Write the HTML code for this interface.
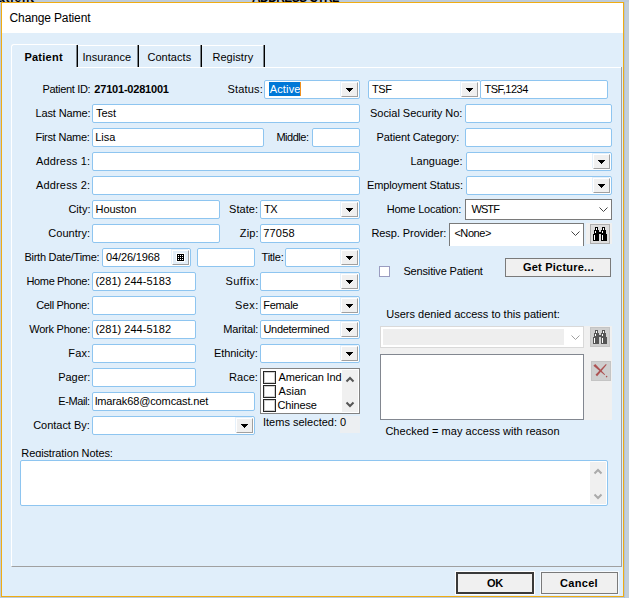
<!DOCTYPE html>
<html><head><meta charset="utf-8"><style>
html,body{margin:0;padding:0;width:629px;height:598px;overflow:hidden;position:relative;background:#E0EEFA}
.t{position:absolute;font-family:"Liberation Sans",sans-serif;font-size:11px;line-height:13px;white-space:nowrap;color:#000}
.f{position:absolute;box-sizing:border-box;border:1px solid #8EC5F0;border-radius:2px;background:#fff}
.db{position:absolute;box-sizing:border-box;background:#F0F0F0;box-shadow:-1px -1px 0 #E6F1FB;border-left:1px solid #fff;border-top:1px solid #fff;border-right:1px solid #A0A0A0;border-bottom:1px solid #A0A0A0}
.ar{position:absolute;display:block}
.w10{position:absolute;box-sizing:border-box;border:1px solid #7A7A7A;background:#fff}
.bb{position:absolute;box-sizing:border-box;border:1px solid #ADADAD;background:#DDDDDD}
.pb{position:absolute;box-sizing:border-box;border:1px solid #7A7A7A;background:#F0F0F0}
.g1{position:absolute;box-sizing:border-box;border:1px solid #D9D9D9;background:#fff}
.lb{position:absolute;box-sizing:border-box;border:1px solid #828790;background:#fff}
.cbx{position:absolute;box-sizing:border-box;border:1px solid #9A9CC0;background:#fff}
.rcb{position:absolute;box-sizing:border-box;border:1px solid #262626;background:#fff;box-shadow:inset 0 0 0 1px #cfcfcf}
</style></head><body>
<div style="position:absolute;left:0;top:0;width:629px;height:598px;background:#BDCBD9"></div>
<div class="t" style="left:-2px;top:-8px;font-weight:bold;font-size:12px;letter-spacing:0.8px">atient</div>
<div class="t" style="left:252px;top:-8px;font-weight:bold;font-size:12px;letter-spacing:-0.6px">ADDRESS CTRL</div>
<div style="position:absolute;left:1px;top:2px;width:621px;height:593px;border:1px solid #F0AC12;background:#E0EEFA"></div>
<div style="position:absolute;left:2px;top:3px;width:621px;height:30px;background:#fff"></div>
<div style="position:absolute;left:624px;top:2px;width:5px;height:596px;background:linear-gradient(90deg,#B2C2D3 0,#B2C2D3 1px,#C3CFDA 1px,#C3CFDA)"></div>
<div class="t" style="left:9.60px;top:12px;letter-spacing:-0.138px;font-size:12px;">Change Patient</div>
<div style="position:absolute;left:11px;top:67px;width:609px;height:499px;border-left:1px solid #fff;border-bottom:1px solid #A0A0A0;border-right:1px solid #A0A0A0"></div>
<div style="position:absolute;left:77px;top:67px;width:544px;height:1px;background:#fff"></div>
<div style="position:absolute;left:11px;top:44px;width:65px;height:24px;border-left:1px solid #fff;border-top:1px solid #fff;border-top-left-radius:3px;background:#E0EEFA"></div>
<div style="position:absolute;left:78px;top:45px;width:186px;height:1px;background:#fff"></div>
<div style="position:absolute;left:77px;top:45px;width:1px;height:22px;background:#000"></div>
<div style="position:absolute;left:76px;top:45px;width:1px;height:22px;background:rgba(0,0,0,0.45)"></div>
<div style="position:absolute;left:138px;top:45px;width:1px;height:22px;background:#000"></div>
<div style="position:absolute;left:137px;top:45px;width:1px;height:22px;background:rgba(0,0,0,0.45)"></div>
<div style="position:absolute;left:201px;top:45px;width:1px;height:22px;background:#000"></div>
<div style="position:absolute;left:200px;top:45px;width:1px;height:22px;background:rgba(0,0,0,0.45)"></div>
<div style="position:absolute;left:264px;top:45px;width:1px;height:22px;background:#000"></div>
<div style="position:absolute;left:263px;top:45px;width:1px;height:22px;background:rgba(0,0,0,0.45)"></div>
<div class="t" style="left:24.40px;top:51px;letter-spacing:0.250px;font-weight:bold;">Patient</div>
<div class="t" style="left:82.40px;top:51px;letter-spacing:0.050px;">Insurance</div>
<div class="t" style="left:147.40px;top:51px;letter-spacing:0.057px;">Contacts</div>
<div class="t" style="left:212.40px;top:51px;letter-spacing:0.071px;">Registry</div>
<div class="t" style="left:42.50px;top:83px;letter-spacing:-0.330px;">Patient ID:</div>
<div class="t" style="left:94.30px;top:83px;letter-spacing:-0.200px;font-weight:bold;">27101-0281001</div>
<div class="t" style="left:227.40px;top:83px;letter-spacing:0.200px;">Status:</div>
<div class="f" style="left:264px;top:80px;width:96px;height:19px;"></div>
<div class="db" style="left:341px;top:82px;width:17px;height:15px;"></div>
<svg class="ar" style="left:346px;top:88px" width="7" height="4" shape-rendering="crispEdges"><path d="M0 0h7v1h-1v1h-1v1h-1v1h-1v-1h-1v-1h-1v-1h-1z" fill="#000"/></svg>
<div style="position:absolute;left:269px;top:82px;width:31px;height:14px;background:#0078D7"></div>
<div class="t" style="left:269.70px;top:83px;letter-spacing:0.160px;color:#fff;">Active</div>
<div style="position:absolute;left:300px;top:82px;width:1px;height:14px;background:#F0901E"></div>
<div class="f" style="left:368px;top:80px;width:113px;height:19px;"></div>
<div class="t" style="left:372.00px;top:83px;letter-spacing:-0.400px;">TSF</div>
<div class="db" style="left:461px;top:82px;width:17px;height:15px;"></div>
<svg class="ar" style="left:466px;top:88px" width="7" height="4" shape-rendering="crispEdges"><path d="M0 0h7v1h-1v1h-1v1h-1v1h-1v-1h-1v-1h-1v-1h-1z" fill="#000"/></svg>
<div class="f" style="left:480px;top:80px;width:128px;height:19px;"></div>
<div class="t" style="left:484.50px;top:83px;letter-spacing:-0.471px;">TSF,1234</div>
<div class="t" style="left:35.50px;top:107px;letter-spacing:-0.144px;">Last Name:</div>
<div class="f" style="left:92px;top:104px;width:268px;height:19px;"></div>
<div class="t" style="left:95.90px;top:107px;letter-spacing:0.033px;">Test</div>
<div class="t" style="left:370.00px;top:107px;letter-spacing:-0.028px;">Social Security No:</div>
<div class="f" style="left:465px;top:104px;width:147px;height:19px;"></div>
<div class="t" style="left:35.40px;top:131px;letter-spacing:-0.230px;">First Name:</div>
<div class="f" style="left:92px;top:128px;width:172px;height:19px;"></div>
<div class="t" style="left:95.20px;top:131px;letter-spacing:0.033px;">Lisa</div>
<div class="t" style="left:276.40px;top:131px;letter-spacing:-0.483px;">Middle:</div>
<div class="f" style="left:312px;top:128px;width:48px;height:19px;"></div>
<div class="t" style="left:376.60px;top:131px;letter-spacing:-0.144px;">Patient Category:</div>
<div class="f" style="left:465px;top:128px;width:147px;height:19px;"></div>
<div class="t" style="left:35.90px;top:155px;letter-spacing:0.178px;">Address 1:</div>
<div class="f" style="left:92px;top:152px;width:268px;height:19px;"></div>
<div class="t" style="left:410.50px;top:155px;letter-spacing:0.000px;">Language:</div>
<div class="f" style="left:466px;top:152px;width:146px;height:19px;"></div>
<div class="db" style="left:593px;top:154px;width:17px;height:15px;"></div>
<svg class="ar" style="left:598px;top:160px" width="7" height="4" shape-rendering="crispEdges"><path d="M0 0h7v1h-1v1h-1v1h-1v1h-1v-1h-1v-1h-1v-1h-1z" fill="#000"/></svg>
<div class="t" style="left:35.90px;top:179px;letter-spacing:0.178px;">Address 2:</div>
<div class="f" style="left:92px;top:176px;width:268px;height:19px;"></div>
<div class="t" style="left:367.00px;top:179px;letter-spacing:-0.147px;">Employment Status:</div>
<div class="f" style="left:466px;top:176px;width:146px;height:19px;"></div>
<div class="db" style="left:593px;top:178px;width:17px;height:15px;"></div>
<svg class="ar" style="left:598px;top:184px" width="7" height="4" shape-rendering="crispEdges"><path d="M0 0h7v1h-1v1h-1v1h-1v1h-1v-1h-1v-1h-1v-1h-1z" fill="#000"/></svg>
<div class="t" style="left:68.40px;top:203px;letter-spacing:0.025px;">City:</div>
<div class="f" style="left:92px;top:200px;width:128px;height:19px;"></div>
<div class="t" style="left:95.50px;top:203px;letter-spacing:-0.033px;">Houston</div>
<div class="t" style="left:229.10px;top:203px;letter-spacing:0.020px;">State:</div>
<div class="f" style="left:260px;top:200px;width:100px;height:19px;"></div>
<div class="t" style="left:263.90px;top:203px;letter-spacing:-0.400px;">TX</div>
<div class="db" style="left:341px;top:202px;width:17px;height:15px;"></div>
<svg class="ar" style="left:346px;top:208px" width="7" height="4" shape-rendering="crispEdges"><path d="M0 0h7v1h-1v1h-1v1h-1v1h-1v-1h-1v-1h-1v-1h-1z" fill="#000"/></svg>
<div class="t" style="left:386.70px;top:203px;letter-spacing:-0.192px;">Home Location:</div>
<div class="w10" style="left:465px;top:199px;width:147px;height:21px;"></div>
<div class="t" style="left:471.50px;top:203px;letter-spacing:-0.933px;">WSTF</div>
<svg class="ar" style="left:599px;top:207px" width="9" height="6"><path d="M0.5 0.5L4.5 4.5L8.5 0.5" stroke="#444" fill="none"/></svg>
<div class="t" style="left:48.30px;top:227px;letter-spacing:0.029px;">Country:</div>
<div class="f" style="left:92px;top:224px;width:128px;height:19px;"></div>
<div class="t" style="left:239.80px;top:227px;letter-spacing:0.133px;">Zip:</div>
<div class="f" style="left:260px;top:224px;width:100px;height:19px;"></div>
<div class="t" style="left:263.20px;top:227px;letter-spacing:0.225px;">77058</div>
<div class="t" style="left:371.40px;top:227px;letter-spacing:-0.064px;">Resp. Provider:</div>
<div class="w10" style="left:449px;top:223px;width:135px;height:23px;border-bottom:none"></div>
<div class="t" style="left:454.40px;top:227px;letter-spacing:-0.440px;">&lt;None&gt;</div>
<svg class="ar" style="left:571px;top:231px" width="9" height="6"><path d="M0.5 0.5L4.5 4.5L8.5 0.5" stroke="#444" fill="none"/></svg>
<div style="position:absolute;left:586px;top:223px;width:26px;height:21px;background:#F0F0F0"></div>
<div class="bb" style="left:590px;top:224px;width:20px;height:20px;"></div>
<svg class="ar" style="left:593px;top:227px" width="14" height="14" shape-rendering="crispEdges"><path d="M2 0h3v3h-3zM1 3h5v4h-5zM0 7h6v7h-6zM9 0h3v3h-3zM8 3h5v4h-5zM8 7h6v7h-6zM6 5h2v2h-2z" fill="#000"/><path d="M3 1h1v2h-1zM2 4h1v2h-1zM1 8h1v5h-1zM10 1h1v2h-1zM9 4h1v2h-1zM9 8h1v5h-1z" fill="#fff"/></svg>
<div class="t" style="left:24.40px;top:251px;letter-spacing:-0.253px;">Birth Date/Time:</div>
<div class="f" style="left:102px;top:248px;width:89px;height:19px;"></div>
<div class="t" style="left:106.00px;top:251px;letter-spacing:-0.133px;">04/26/1968</div>
<div class="db" style="left:172px;top:250px;width:17px;height:15px;background:#E3EEF8"></div>
<svg class="ar" style="left:176px;top:253px" width="9" height="9" shape-rendering="crispEdges"><rect width="9" height="9" fill="#fff"/><g transform="translate(1 1)"><rect width="7" height="7" fill="#000"/><path d="M1 1h1v1h-1zM3 1h1v1h-1zM5 1h1v1h-1zM1 3h1v1h-1zM3 3h1v1h-1zM5 3h1v1h-1zM1 5h1v1h-1zM3 5h1v1h-1zM5 5h1v1h-1z" fill="#fff"/></g></svg>
<div class="f" style="left:197px;top:248px;width:58px;height:19px;"></div>
<div class="t" style="left:261.60px;top:251px;letter-spacing:-0.260px;">Title:</div>
<div class="f" style="left:285px;top:248px;width:75px;height:19px;"></div>
<div class="db" style="left:341px;top:250px;width:17px;height:15px;"></div>
<svg class="ar" style="left:346px;top:256px" width="7" height="4" shape-rendering="crispEdges"><path d="M0 0h7v1h-1v1h-1v1h-1v1h-1v-1h-1v-1h-1v-1h-1z" fill="#000"/></svg>
<div class="cbx" style="left:379px;top:266px;width:11px;height:11px;"></div>
<div class="t" style="left:403.40px;top:265px;letter-spacing:-0.150px;">Sensitive Patient</div>
<div class="pb" style="left:505px;top:258px;width:106px;height:19px;"></div>
<div class="t" style="left:522.90px;top:261px;letter-spacing:0.231px;font-weight:bold;">Get Picture...</div>
<div class="t" style="left:26.50px;top:275px;letter-spacing:-0.360px;">Home Phone:</div>
<div class="f" style="left:92px;top:272px;width:104px;height:19px;"></div>
<div class="t" style="left:95.40px;top:275px;letter-spacing:0.031px;">(281) 244-5183</div>
<div class="t" style="left:225.40px;top:275px;letter-spacing:0.467px;">Suffix:</div>
<div class="f" style="left:260px;top:272px;width:100px;height:19px;"></div>
<div class="db" style="left:341px;top:274px;width:17px;height:15px;"></div>
<svg class="ar" style="left:346px;top:280px" width="7" height="4" shape-rendering="crispEdges"><path d="M0 0h7v1h-1v1h-1v1h-1v1h-1v-1h-1v-1h-1v-1h-1z" fill="#000"/></svg>
<div class="t" style="left:36.20px;top:299px;letter-spacing:-0.330px;">Cell Phone:</div>
<div class="f" style="left:92px;top:296px;width:104px;height:19px;"></div>
<div class="t" style="left:235.00px;top:299px;letter-spacing:0.400px;">Sex:</div>
<div class="f" style="left:260px;top:296px;width:100px;height:19px;"></div>
<div class="t" style="left:263.30px;top:299px;letter-spacing:-0.320px;">Female</div>
<div class="db" style="left:341px;top:298px;width:17px;height:15px;"></div>
<svg class="ar" style="left:346px;top:304px" width="7" height="4" shape-rendering="crispEdges"><path d="M0 0h7v1h-1v1h-1v1h-1v1h-1v-1h-1v-1h-1v-1h-1z" fill="#000"/></svg>
<div class="t" style="left:386.30px;top:308px;letter-spacing:-0.003px;">Users denied access to this patient:</div>
<div class="t" style="left:29.20px;top:323px;letter-spacing:-0.230px;">Work Phone:</div>
<div class="f" style="left:92px;top:320px;width:104px;height:19px;"></div>
<div class="t" style="left:95.40px;top:323px;letter-spacing:0.031px;">(281) 244-5182</div>
<div class="t" style="left:223.30px;top:323px;letter-spacing:-0.157px;">Marital:</div>
<div class="f" style="left:260px;top:320px;width:100px;height:19px;"></div>
<div class="t" style="left:263.40px;top:323px;letter-spacing:-0.282px;">Undetermined</div>
<div class="db" style="left:341px;top:322px;width:17px;height:15px;"></div>
<svg class="ar" style="left:346px;top:328px" width="7" height="4" shape-rendering="crispEdges"><path d="M0 0h7v1h-1v1h-1v1h-1v1h-1v-1h-1v-1h-1v-1h-1z" fill="#000"/></svg>
<div style="position:absolute;left:380px;top:326px;width:232px;height:94px;background:#F0F0F0"></div>
<div class="g1" style="left:380px;top:326px;width:204px;height:22px;"></div>
<div style="position:absolute;left:383px;top:329px;width:181px;height:16px;background:#EEEEEE"></div>
<svg class="ar" style="left:571px;top:335px" width="9" height="6"><path d="M0.5 0.5L4.5 4.5L8.5 0.5" stroke="#A0A0A0" fill="none"/></svg>
<div class="bb" style="left:590px;top:327px;width:20px;height:20px;background:#CFCFCF;border-color:#C4C4C4"></div>
<svg class="ar" style="left:593px;top:330px" width="14" height="14" shape-rendering="crispEdges"><path d="M2 0h3v3h-3zM1 3h5v4h-5zM0 7h6v7h-6zM9 0h3v3h-3zM8 3h5v4h-5zM8 7h6v7h-6zM6 5h2v2h-2z" fill="#555"/><path d="M3 1h1v2h-1zM2 4h1v2h-1zM1 8h1v5h-1zM10 1h1v2h-1zM9 4h1v2h-1zM9 8h1v5h-1z" fill="#fff"/></svg>
<div class="lb" style="left:380px;top:354px;width:204px;height:66px;"></div>
<div class="bb" style="left:591px;top:361px;width:20px;height:20px;background:#CFCFCF;border-color:#C4C4C4"></div>
<svg class="ar" style="left:593px;top:363px" width="16" height="16"><g fill="#AD5252"><polygon points="2.22,0.88 12.12,11.48 11.48,12.12 0.38,2.72"/><polygon points="2.48,11.77 12.93,0.97 13.67,1.63 4.12,13.23"/><circle cx="13.6" cy="13.6" r="0.8"/></g></svg>
<div class="t" style="left:385.40px;top:425px;letter-spacing:0.026px;">Checked = may access with reason</div>
<div class="t" style="left:68.30px;top:347px;letter-spacing:0.200px;">Fax:</div>
<div class="f" style="left:92px;top:344px;width:104px;height:19px;"></div>
<div class="t" style="left:214.00px;top:347px;letter-spacing:-0.089px;">Ethnicity:</div>
<div class="f" style="left:260px;top:344px;width:100px;height:19px;"></div>
<div class="db" style="left:341px;top:346px;width:17px;height:15px;"></div>
<svg class="ar" style="left:346px;top:352px" width="7" height="4" shape-rendering="crispEdges"><path d="M0 0h7v1h-1v1h-1v1h-1v1h-1v-1h-1v-1h-1v-1h-1z" fill="#000"/></svg>
<div class="t" style="left:58.30px;top:371px;letter-spacing:-0.080px;">Pager:</div>
<div class="f" style="left:92px;top:368px;width:104px;height:19px;"></div>
<div class="t" style="left:229.10px;top:371px;letter-spacing:0.025px;">Race:</div>
<div class="lb" style="left:260px;top:368px;width:100px;height:46px;border-color:#828282"></div>
<div style="position:absolute;left:342px;top:370px;width:16px;height:42px;background:#F0F0F0"></div>
<svg class="ar" style="left:345px;top:376px" width="10" height="7"><path d="M1.5 5.5L5 2L8.5 5.5" stroke="#555" stroke-width="2" fill="none"/></svg>
<svg class="ar" style="left:345px;top:401px" width="10" height="7"><path d="M1.5 1.5L5 5L8.5 1.5" stroke="#555" stroke-width="2" fill="none"/></svg>
<div class="rcb" style="left:263px;top:371px;width:13px;height:13px;"></div>
<div class="t" style="left:278.60px;top:371px;letter-spacing:-0.173px;">American Ind</div>
<div class="rcb" style="left:263px;top:385px;width:13px;height:13px;"></div>
<div class="t" style="left:278.60px;top:385px;letter-spacing:0.025px;">Asian</div>
<div class="rcb" style="left:263px;top:399px;width:13px;height:13px;"></div>
<div class="t" style="left:277.60px;top:399px;letter-spacing:-0.167px;">Chinese</div>
<div class="t" style="left:58.30px;top:395px;letter-spacing:-0.400px;">E-Mail:</div>
<div class="f" style="left:92px;top:392px;width:163px;height:19px;"></div>
<div class="t" style="left:94.90px;top:395px;letter-spacing:-0.121px;">lmarak68@comcast.net</div>
<div class="t" style="left:33.20px;top:419px;letter-spacing:-0.030px;">Contact By:</div>
<div class="f" style="left:92px;top:416px;width:163px;height:19px;"></div>
<div class="db" style="left:236px;top:418px;width:17px;height:15px;"></div>
<svg class="ar" style="left:241px;top:424px" width="7" height="4" shape-rendering="crispEdges"><path d="M0 0h7v1h-1v1h-1v1h-1v1h-1v-1h-1v-1h-1v-1h-1z" fill="#000"/></svg>
<div style="position:absolute;left:340px;top:416px;width:20px;height:17px;background:#ECEFF2"></div>
<div class="t" style="left:263.00px;top:416px;letter-spacing:0.000px;">Items selected: 0</div>
<div class="t" style="left:21.30px;top:447px;letter-spacing:-0.111px;">Registration Notes:</div>
<div style="position:absolute;left:15px;top:457px;width:200px;height:3px;background:#E0EEFA"></div>
<div class="f" style="left:20px;top:460px;width:588px;height:46px;"></div>
<div style="position:absolute;left:590px;top:462px;width:16px;height:42px;background:#F0F0F0"></div>
<svg class="ar" style="left:593px;top:468px" width="10" height="7"><path d="M1.5 5.5L5 2L8.5 5.5" stroke="#ABABAB" stroke-width="2" fill="none"/></svg>
<svg class="ar" style="left:593px;top:493px" width="10" height="7"><path d="M1.5 1.5L5 5L8.5 1.5" stroke="#ABABAB" stroke-width="2" fill="none"/></svg>
<div class="pb" style="left:456px;top:572px;width:78px;height:22px;border:2px solid #3A3A3A;outline:1px solid #fff"></div>
<div class="t" style="left:487.00px;top:577px;letter-spacing:-0.400px;font-weight:bold;">OK</div>
<div class="pb" style="left:541px;top:572px;width:77px;height:22px;outline:1px solid rgba(255,255,255,0.7)"></div>
<div class="t" style="left:560.00px;top:577px;letter-spacing:0.320px;font-weight:bold;">Cancel</div>
</body></html>
